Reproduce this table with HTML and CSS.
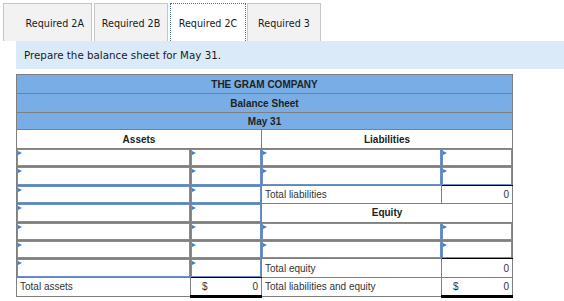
FILE: index.html
```html
<!DOCTYPE html>
<html>
<head>
<meta charset="utf-8">
<link rel="stylesheet" href="styles.css">
</head>
<body>
<div class="tabs">
  <div class="tab t1">Required 2A</div>
  <div class="tab t2">Required 2B</div>
  <div class="tab t3 active">Required 2C</div>
  <div class="tab t4">Required 3</div>
</div>
<div class="band">Prepare the balance sheet for May 31.</div>
<table class="bs">
  <colgroup>
    <col class="c1"><col class="c2"><col class="c3"><col class="c4">
  </colgroup>
  <tr class="h1"><td colspan="4" class="title">THE GRAM COMPANY</td></tr>
  <tr class="h2"><td colspan="4" class="title">Balance Sheet</td></tr>
  <tr class="h3"><td colspan="4" class="title">May 31</td></tr>
  <tr class="h4"><td colspan="2" class="sec">Assets</td><td colspan="2" class="sec">Liabilities</td></tr>
  <tr class="r"><td class="in"><div class="inp"></div></td><td class="in"><div class="inp"></div></td><td class="in"><div class="inp"></div></td><td class="in"><div class="inp"></div></td></tr>
  <tr class="r"><td class="in"><div class="inp"></div></td><td class="in"><div class="inp"></div></td><td class="in"><div class="inp"></div></td><td class="in blk"><div class="inp"></div></td></tr>
  <tr class="r"><td class="in"><div class="inp"></div></td><td class="in"><div class="inp"></div></td><td class="lbl">Total liabilities</td><td class="num">0</td></tr>
  <tr class="r"><td class="in"><div class="inp"></div></td><td class="in"><div class="inp"></div></td><td colspan="2" class="sec">Equity</td></tr>
  <tr class="r"><td class="in"><div class="inp"></div></td><td class="in"><div class="inp"></div></td><td class="in"><div class="inp"></div></td><td class="in"><div class="inp"></div></td></tr>
  <tr class="r"><td class="in"><div class="inp"></div></td><td class="in"><div class="inp"></div></td><td class="in"><div class="inp"></div></td><td class="in blk"><div class="inp"></div></td></tr>
  <tr class="r"><td class="in"><div class="inp"></div></td><td class="in blk"><div class="inp"></div></td><td class="lbl">Total equity</td><td class="num">0</td></tr>
  <tr class="r"><td class="lbl">Total assets</td><td class="num dbl"><span class="cur">$</span>0</td><td class="lbl">Total liabilities and equity</td><td class="num dbl"><span class="cur">$</span>0</td></tr>
</table>
</body>
</html>
```
FILE: styles.css
```css
html, body {
  margin: 0;
  padding: 0;
  background: #fff;
}
body {
  font-family: "DejaVu Sans", Verdana, sans-serif;
  color: #222;
}
.tabs {
  display: flex;
  align-items: flex-end;
  padding: 3px 0 0 3px;
  height: 41px;
  box-sizing: border-box;
}
.tab {
  box-sizing: border-box;
  height: 38px;
  display: flex;
  align-items: center;
  justify-content: center;
  background: #f2f2f2;
  border: 1px solid #c6c6c6;
  border-bottom: none;
  font-size: 9.6px;
  color: #1a1a1a;
  margin-right: 2px;
  padding-top: 1px;
}
.t1 { width: 89px; justify-content: flex-end; padding-right: 7px; }
.t2 { width: 74px; }
.t3 { width: 76px; margin-right: 1px; }
.t4 { width: 74px; }
.tab.active {
  background: #fff;
  border: 1px dotted #4c6c9c;
  border-bottom: none;
}
.band {
  margin-left: 16px;
  height: 28px;
  background: #daeaf8;
  font-size: 10.3px;
  display: flex;
  align-items: center;
  padding-left: 8px;
  color: #1a1a1a;
}
.bs {
  margin: 5px 0 0 16px;
  border-collapse: collapse;
  table-layout: fixed;
  width: 496px;
  font-family: "Liberation Sans", Arial, sans-serif;
  font-size: 10px;
}
.c1 { width: 174px; }
.c2 { width: 71px; }
.c3 { width: 180px; }
.c4 { width: 71px; }
.bs td {
  border: 1px solid #7f7f7f;
  padding: 0;
  vertical-align: middle;
}
.title {
  background: #78aee5;
  text-align: center;
  font-weight: bold;
  color: #222;
}
.h1 td, .h2 td, .h4 td { height: 18px; }
.h3 td { height: 16px; }
.sec {
  text-align: center;
  font-weight: bold;
  color: #222;
  height: 17.4px;
}
.r td { height: 17.4px; }
.in { position: relative; }
.inp {
  box-sizing: border-box;
  height: 17.4px;
  border: 1px solid #6a90c8;
  position: relative;
}
.inp::before {
  content: "";
  position: absolute;
  top: 1px;
  left: 0;
  border-left: 4px solid #3f7ed0;
  border-top: 2px solid transparent;
  border-bottom: 2px solid transparent;
}
.lbl {
  padding-left: 3px !important;
  color: #333;
}
.num {
  text-align: right;
  padding-right: 3px !important;
  color: #333;
}
.cur {
  float: left;
  padding-left: 11px;
}
.blk { border-bottom: 1px solid #000 !important; }
.dbl { border-bottom: 3px solid #000 !important; }
```
